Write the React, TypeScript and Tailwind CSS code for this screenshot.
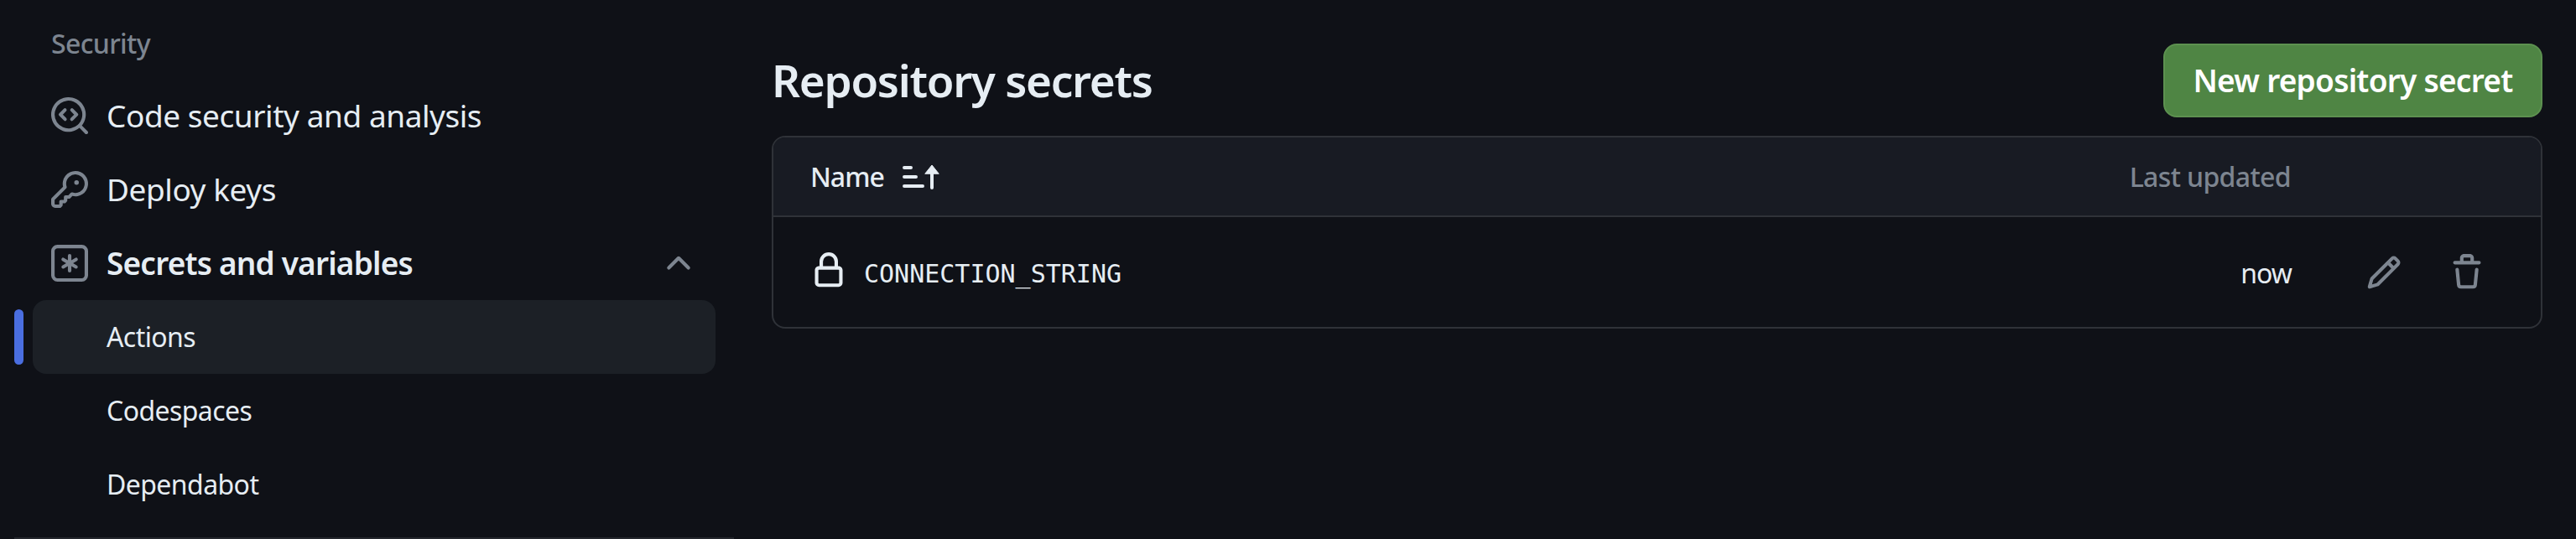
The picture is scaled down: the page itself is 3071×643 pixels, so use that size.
const sans = 'font-["Noto_Sans",sans-serif]'

// octicons, 16px set, drawn at 44
const icons = {
  codescan: [
    'M8.47 4.97a.75.75 0 0 0 0 1.06L9.94 7.5 8.47 8.97a.75.75 0 1 0 1.06 1.06l2-2a.75.75 0 0 0 0-1.06l-2-2a.75.75 0 0 0-1.06 0ZM6.53 6.03a.75.75 0 0 0-1.06-1.06l-2 2a.75.75 0 0 0 0 1.06l2 2a.75.75 0 1 0 1.06-1.06L5.06 7.5l1.47-1.47Z',
    'M12.246 13.307a7.501 7.501 0 1 1 1.06-1.06l2.474 2.473a.749.749 0 0 1-.326 1.275.749.749 0 0 1-.734-.215ZM1.5 7.5a6.002 6.002 0 0 0 3.608 5.504 6.002 6.002 0 0 0 6.486-1.117.75.75 0 0 1 .292-.293A6 6 0 1 0 1.5 7.5Z',
  ],
  key: ['M10.5 0a5.499 5.499 0 1 1-1.288 10.848l-.932.932a.749.749 0 0 1-.53.22H7v.75a.749.749 0 0 1-.22.53l-.5.5a.749.749 0 0 1-.53.22H5v.75a.749.749 0 0 1-.22.53l-.5.5a.749.749 0 0 1-.53.22h-2A1.75 1.75 0 0 1 0 14.25v-2c0-.199.079-.389.22-.53l4.932-4.932A5.5 5.5 0 0 1 10.5 0Zm-4 5.5c-.001.431.069.86.205 1.269a.75.75 0 0 1-.181.768L1.5 12.56v1.69c0 .138.112.25.25.25h1.69l.06-.06v-1.19a.75.75 0 0 1 .75-.75h1.19l.06-.06v-1.19a.75.75 0 0 1 .75-.75h1.19l1.023-1.025a.75.75 0 0 1 .768-.18A4 4 0 1 0 6.5 5.5ZM11 6a1 1 0 1 1 0-2 1 1 0 0 1 0 2Z'],
  asterisk: [
    'M0 2.75A2.75 2.75 0 0 1 2.75 0h10.5A2.75 2.75 0 0 1 16 2.75v10.5A2.75 2.75 0 0 1 13.25 16H2.75A2.75 2.75 0 0 1 0 13.25ZM2.75 1.5c-.69 0-1.25.56-1.25 1.25v10.5c0 .69.56 1.25 1.25 1.25h10.5c.69 0 1.25-.56 1.25-1.25V2.75c0-.69-.56-1.25-1.25-1.25Z',
    'M8 4a.75.75 0 0 1 .75.75V6.7l1.69-.975a.75.75 0 0 1 .75 1.3L9.5 8l1.69.976a.75.75 0 0 1-.75 1.298L8.75 9.3v1.951a.75.75 0 0 1-1.5 0V9.299l-1.69.976a.75.75 0 0 1-.75-1.298L6.5 8l-1.69-.975a.75.75 0 0 1 .75-1.3l1.69.976V4.75A.75.75 0 0 1 8 4Z',
  ],
  chevron: ['M3.22 10.53a.749.749 0 0 1 0-1.06l4.25-4.25a.749.749 0 0 1 1.06 0l4.25 4.25a.749.749 0 1 1-1.06 1.06L8 6.81l-3.72 3.72a.75.75 0 0 1-1.06 0Z'],
  lock: ['M4 4a4 4 0 0 1 8 0v2h.25c.966 0 1.75.784 1.75 1.75v5.5A1.75 1.75 0 0 1 12.25 15h-8.5A1.75 1.75 0 0 1 2 13.25v-5.5C2 6.784 2.784 6 3.75 6H4Zm8.25 3.5h-8.5a.25.25 0 0 0-.25.25v5.5c0 .138.112.25.25.25h8.5a.25.25 0 0 0 .25-.25v-5.5a.25.25 0 0 0-.25-.25ZM10.5 6V4a2.5 2.5 0 1 0-5 0v2Z'],
  pencil: ['M11.013 1.427a1.75 1.75 0 0 1 2.474 0l1.086 1.086a1.75 1.75 0 0 1 0 2.474l-8.61 8.61c-.21.21-.47.364-.756.445l-3.251.93a.75.75 0 0 1-.927-.928l.929-3.25c.081-.286.235-.547.445-.758l8.61-8.61Zm.176 4.823L9.75 4.81l-6.286 6.287a.253.253 0 0 0-.064.108l-.558 1.953 1.953-.558a.253.253 0 0 0 .108-.064Zm1.238-3.763a.25.25 0 0 0-.354 0L10.811 3.75l1.439 1.44 1.263-1.263a.25.25 0 0 0 0-.354Z'],
  trash: ['M11 1.75V3h2.25a.75.75 0 0 1 0 1.5H2.75a.75.75 0 0 1 0-1.5H5V1.75C5 .784 5.784 0 6.75 0h2.5C10.216 0 11 .784 11 1.75ZM4.496 6.675l.66 6.6a.25.25 0 0 0 .249.225h5.19a.25.25 0 0 0 .249-.225l.66-6.6a.75.75 0 0 1 1.492.149l-.66 6.6A1.748 1.748 0 0 1 10.595 15h-5.19a1.75 1.75 0 0 1-1.741-1.575l-.66-6.6a.75.75 0 1 1 1.492-.15ZM6.5 1.75V3h3V1.75a.25.25 0 0 0-.25-.25h-2.5a.25.25 0 0 0-.25.25Z'],
}

const Octicon = ({ name, className }: { name: keyof typeof icons, className?: string }) => (
  <svg viewBox="0 0 16 16" width={44} height={44} fill="currentColor" className={`shrink-0 ${className ?? ''}`}>
    {icons[name].map((d) => <path key={d} d={d} />)}
  </svg>
)

const SortIcon = () => (
  <svg viewBox="0 0 44 30" width={44} height={30} className="ml-[22px] text-[#e6edf3]" fill="currentColor" stroke="currentColor" strokeLinecap="round">
    <path d="M2 4h8M2 15h14M2 26h22M35 10v18" strokeWidth={4} fill="none" />
    <path d="M27 11 35 1 43 11Z" strokeWidth={1} strokeLinejoin="round" />
  </svg>
)

const NavRow = ({ icon, label, bold }: { icon: keyof typeof icons, label: string, bold?: boolean }) => (
  <div className="h-[88px] pl-[22px] pr-[22px] flex items-center">
    <Octicon name={icon} className="text-[#7d8590]" />
    <span className={`ml-[22px] text-[37px] text-[#e6edf3] ${bold ? 'font-semibold tracking-[-0.022em]' : 'tracking-[-0.012em]'}`}>{label}</span>
    {bold && <Octicon name="chevron" className="ml-auto text-[#7d8590]" />}
  </div>
)

const SubRow = ({ label, active }: { label: string, active?: boolean }) => (
  <div className={`relative h-[88px] pl-[88px] flex items-center rounded-[16px] text-[32px] tracking-[-0.018em] text-[#e6edf3] ${active ? 'bg-[#1c2026]' : ''}`}>
    {active && <span className="absolute -left-[22px] top-[11px] w-[11px] h-[66px] rounded-full bg-[#4a6ee0]" />}
    {label}
  </div>
)

export default function App() {
  return (
    <div className={`${sans} w-[3071px] h-[643px] bg-[#0f1117] flex pl-[17px] pr-[40px] overflow-hidden`}>
      <div className="w-[858px] h-[643px] shrink-0 px-[22px] border-b-[2px] border-[#24272d]">
        <div className="h-[94px] pl-[22px] pt-[10px] flex items-center text-[32px] font-medium tracking-[-0.02em] text-[#7d8590]">Security</div>
        <NavRow icon="codescan" label="Code security and analysis" />
        <NavRow icon="key" label="Deploy keys" />
        <NavRow icon="asterisk" label="Secrets and variables" bold />
        <SubRow label="Actions" active />
        <SubRow label="Codespaces" />
        <SubRow label="Dependabot" />
      </div>

      <div className="ml-[45px] flex-1 pt-[52px]">
        <div className="h-[88px] flex items-center justify-between">
          <h2 className="text-[53px] font-semibold tracking-[-0.024em] text-[#e6edf3]">Repository secrets</h2>
          <button className="h-[88px] w-[452px] rounded-[16px] bg-[#4f8544] border-[2px] border-[#5d9150] text-[37px] font-semibold tracking-[-0.02em] text-white">New repository secret</button>
        </div>

        <div className="mt-[22px] h-[230px] border-[2px] border-[#2f3238] rounded-[16px] overflow-hidden">
          <div className="h-[95px] bg-[#181b23] border-b-[2px] border-[#2f3238] flex items-center pl-[44px] pr-[298px]">
            <span className="text-[32px] font-medium tracking-[-0.03em] text-[#e6edf3]">Name</span>
            <SortIcon />
            <span className="ml-auto text-[32px] font-medium tracking-[-0.02em] text-[#7d8590]">Last updated</span>
          </div>
          <div className="h-[131px] flex items-center pl-[44px] pr-[66px]">
            <Octicon name="lock" className="text-[#e6edf3] mb-[4px]" />
            <span className='ml-[20px] mt-[4px] font-["DejaVu_Sans_Mono",monospace] text-[30px] text-[#e6edf3]'>CONNECTION_STRING</span>
            <span className="ml-auto mt-[2px] text-[32px] tracking-[-0.03em] text-[#e6edf3]">now</span>
            <Octicon name="pencil" className="ml-[88px] text-[#7d8590]" />
            <Octicon name="trash" className="ml-[55px] text-[#7d8590]" />
          </div>
        </div>
      </div>
    </div>
  )
}
